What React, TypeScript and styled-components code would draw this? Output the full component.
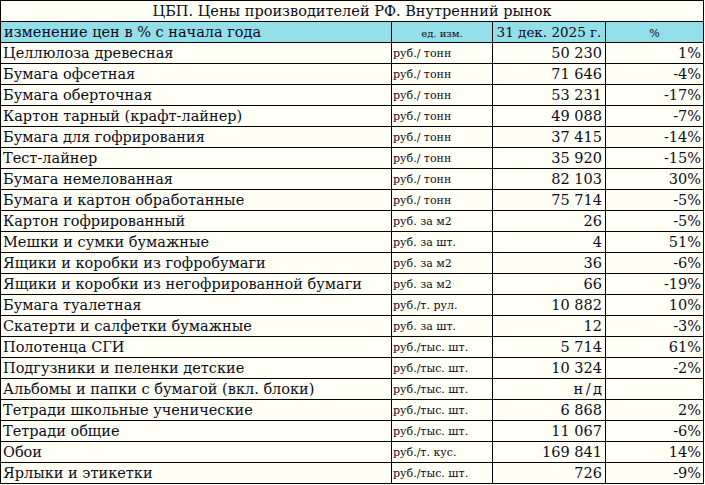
import { createGlobalStyle } from "styled-components";
import styled from "styled-components";

const GlobalStyle = createGlobalStyle`
  html, body {
    margin: 0;
    padding: 0;
    background: #fffff6;
  }
`;

const Table = styled.table`
  border-collapse: collapse;
  table-layout: fixed;
  width: 703px;
  font-family: "DejaVu Serif", "Liberation Serif", serif;
  color: #0c0c22;
  background: #fffff6;
  border: 1px solid #000;
`;

const TitleCell = styled.td`
  height: 20px;
  padding: 0;
  text-align: center;
  vertical-align: bottom;
  font-size: 14.5px;
  line-height: 19px;
  border-bottom: 1px solid #000;
`;

const HeadCell = styled.td<{ $align?: string; $size?: number }>`
  height: 20px;
  padding: 0 3px;
  background: #93dee8;
  text-align: ${(p) => p.$align || "left"};
  vertical-align: bottom;
  font-size: ${(p) => p.$size ?? 14.5}px;
  line-height: ${(p) => (p.$size && p.$size < 12 ? "17px" : "19px")};
  border: 1px solid #000;
  white-space: nowrap;
`;

const NameCell = styled.td`
  height: 20px;
  padding: 0 2px;
  vertical-align: bottom;
  font-size: 14.5px;
  line-height: 19px;
  border: 1px solid #000;
  white-space: nowrap;
  overflow: hidden;
`;

const UnitCell = styled.td`
  padding: 0 1px;
  vertical-align: bottom;
  font-size: 11px;
  line-height: 18px;
  border: 1px solid #000;
  white-space: nowrap;
  overflow: hidden;
`;

const NumCell = styled.td<{ $pad?: number }>`
  padding: 0 ${(p) => p.$pad ?? 3}px 0 0;
  text-align: right;
  vertical-align: bottom;
  font-size: 14.5px;
  line-height: 19px;
  border: 1px solid #000;
  white-space: nowrap;
`;

const NoData = styled.span`
  letter-spacing: 2.5px;
  margin-right: -2.5px;
`;

type Row = [string, string, string, string];

const rows: Row[] = [
  ["Целлюлоза древесная", "руб./ тонн", "50 230", "1%"],
  ["Бумага офсетная", "руб./ тонн", "71 646", "-4%"],
  ["Бумага оберточная", "руб./ тонн", "53 231", "-17%"],
  ["Картон тарный (крафт-лайнер)", "руб./ тонн", "49 088", "-7%"],
  ["Бумага для гофрирования", "руб./ тонн", "37 415", "-14%"],
  ["Тест-лайнер", "руб./ тонн", "35 920", "-15%"],
  ["Бумага немелованная", "руб./ тонн", "82 103", "30%"],
  ["Бумага и картон обработанные", "руб./ тонн", "75 714", "-5%"],
  ["Картон гофрированный", "руб. за м2", "26", "-5%"],
  ["Мешки и сумки бумажные", "руб. за шт.", "4", "51%"],
  ["Ящики и коробки из гофробумаги", "руб. за м2", "36", "-6%"],
  ["Ящики и коробки из негофрированной бумаги", "руб. за м2", "66", "-19%"],
  ["Бумага туалетная", "руб./т. рул.", "10 882", "10%"],
  ["Скатерти и салфетки бумажные", "руб. за шт.", "12", "-3%"],
  ["Полотенца СГИ", "руб./тыс. шт.", "5 714", "61%"],
  ["Подгузники и пеленки детские", "руб./тыс. шт.", "10 324", "-2%"],
  ["Альбомы и папки с бумагой (вкл. блоки)", "руб./тыс. шт.", "н/д", ""],
  ["Тетради школьные ученические", "руб./тыс. шт.", "6 868", "2%"],
  ["Тетради общие", "руб./тыс. шт.", "11 067", "-6%"],
  ["Обои", "руб./т. кус.", "169 841", "14%"],
  ["Ярлыки и этикетки", "руб./тыс. шт.", "726", "-9%"],
];

export default function App() {
  return (
    <>
      <GlobalStyle />
      <Table>
        <colgroup>
          <col style={{ width: 391 }} />
          <col style={{ width: 101 }} />
          <col style={{ width: 113 }} />
          <col style={{ width: 98 }} />
        </colgroup>
        <tbody>
          <tr>
            <TitleCell colSpan={4}>
              ЦБП. Цены производителей РФ. Внутренний рынок
            </TitleCell>
          </tr>
          <tr>
            <HeadCell>изменение цен в % с начала года</HeadCell>
            <HeadCell $align="center" $size={10}>
              ед. изм.
            </HeadCell>
            <HeadCell $align="center" $size={13.5}>
              31 дек. 2025 г.
            </HeadCell>
            <HeadCell $align="center" $size={11}>
              %
            </HeadCell>
          </tr>
          {rows.map(([name, unit, value, pct]) => (
            <tr key={name}>
              <NameCell>{name}</NameCell>
              <UnitCell>{unit}</UnitCell>
              <NumCell>
                {value === "н/д" ? <NoData>{value}</NoData> : value}
              </NumCell>
              <NumCell $pad={2}>{pct}</NumCell>
            </tr>
          ))}
        </tbody>
      </Table>
    </>
  );
}
